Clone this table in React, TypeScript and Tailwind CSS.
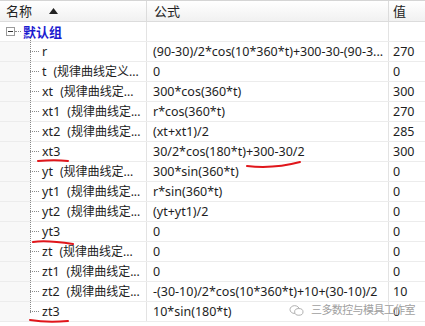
const FONT = { fontFamily: '"Noto Sans", "Noto Sans CJK SC", sans-serif' };

type Row = { name: string; desc?: string; formula: string; value: string };

const ROWS: Row[] = [
  { name: 'r', formula: '(90-30)/2*cos(10*360*t)+300-30-(90-3...', value: '270' },
  { name: 't', desc: '(规律曲线定义...', formula: '0', value: '0' },
  { name: 'xt', desc: '(规律曲线定...', formula: '300*cos(360*t)', value: '300' },
  { name: 'xt1', desc: '(规律曲线定...', formula: 'r*cos(360*t)', value: '270' },
  { name: 'xt2', desc: '(规律曲线定...', formula: '(xt+xt1)/2', value: '285' },
  { name: 'xt3', formula: '30/2*cos(180*t)+300-30/2', value: '300' },
  { name: 'yt', desc: '(规律曲线定...', formula: '300*sin(360*t)', value: '0' },
  { name: 'yt1', desc: '(规律曲线定...', formula: 'r*sin(360*t)', value: '0' },
  { name: 'yt2', desc: '(规律曲线定...', formula: '(yt+yt1)/2', value: '0' },
  { name: 'yt3', formula: '0', value: '0' },
  { name: 'zt', desc: '(规律曲线定...', formula: '0', value: '0' },
  { name: 'zt1', desc: '(规律曲线定...', formula: '0', value: '0' },
  { name: 'zt2', desc: '(规律曲线定...', formula: '-(30-10)/2*cos(10*360*t)+10+(30-10)/2', value: '10' },
  { name: 'zt3', formula: '10*sin(180*t)', value: '0' },
];

function Cells({ name, formula, value }: { name: React.ReactNode; formula: string; value: string }) {
  return (
    <div className="flex h-[20px] border-b border-[#ececec] text-[12.5px] text-[#1e1e1e] leading-[20px]">
      <div className="w-[146px] shrink-0 flex items-center">{name}</div>
      <div className="w-[242px] shrink-0 border-l border-[#e3e3e3] pl-[6px] whitespace-nowrap overflow-hidden">{formula}</div>
      <div className="flex-1 border-l border-[#e3e3e3] pl-[4px]">{value}</div>
    </div>
  );
}

export default function App() {
  return (
    <div className="relative w-[425px] h-[326px] bg-white overflow-hidden select-none" style={FONT}>
      {/* header */}
      <div className="flex h-[22px] border-t border-[#d5d5d5] border-b border-b-[#dcdcdc] bg-gradient-to-b from-white to-[#f1f1f1] text-[13px] text-[#222] leading-[20px]">
        <div className="w-[146px] shrink-0 flex items-center pl-[6px]">
          <span>名称</span>
          <svg width="9" height="6" viewBox="0 0 9 6" className="ml-[17px]">
            <path d="M0 6 L4.5 0 L9 6 Z" fill="#222" />
          </svg>
        </div>
        <div className="w-[242px] shrink-0 border-l border-[#dcdcdc] pl-[7px] flex items-center">公式</div>
        <div className="flex-1 border-l border-[#dcdcdc] pl-[4px] flex items-center">值</div>
      </div>

      {/* group row */}
      <Cells
        name={
          <div className="flex items-center pl-[6px]">
            <span className="w-[9px] h-[9px] border border-[#9a9a9a] bg-white flex items-center justify-center">
              <span className="w-[5px] h-px bg-[#333]" />
            </span>
            <span className="w-[6px] border-t border-dotted border-[#888]" />
            <span className="ml-[2px] font-bold text-[#1a1ad0] text-[13px]">默认组</span>
          </div>
        }
        formula=""
        value=""
      />

      {ROWS.map((r) => (
        <Cells
          key={r.name}
          name={
            <div className="flex items-center h-full w-full">
              <div className="w-[30px] h-full bg-[#f8f8f8]" />
              <span className="w-[9px] border-t border-dotted border-[#888]" />
              <span className="ml-[3px] whitespace-nowrap">
                {r.name}
                {r.desc && <span className="ml-[7px] text-[12px]">{r.desc}</span>}
              </span>
            </div>
          }
          formula={r.formula}
          value={r.value}
        />
      ))}

      {/* tree vertical line */}
      <div className="absolute left-[30px] top-[38px] h-[275px] border-l border-dotted border-[#888]" />

      {/* red annotation strokes */}
      <svg className="absolute left-0 top-0 pointer-events-none" width="425" height="326">
        <g stroke="#e0161b" strokeWidth="2" fill="none" strokeLinecap="round">
          <path d="M38 161 C48 160 60 160 68 161" />
          <path d="M247 166 C265 168 285 166 300 162" />
          <path d="M33 242 C45 240 60 242 73 244" />
          <path d="M30 320 C42 322 56 322 68 321" />
        </g>
      </svg>

      {/* watermark */}
      <div className="absolute left-[289px] top-[302px] flex items-center gap-[7px] text-[11px] tracking-[-0.6px] text-[#a0a0a0] [text-shadow:0_0_2px_#fff,0_0_2px_#fff]">
        <svg width="15" height="13" viewBox="0 0 16 14">
          <g fill="none" stroke="#aaa" strokeWidth="1">
            <ellipse cx="6" cy="6" rx="5" ry="4.2" />
            <ellipse cx="10.5" cy="8.5" rx="4.5" ry="3.6" fill="#fff" />
          </g>
        </svg>
        <span>三多数控与模具工作室</span>
      </div>
    </div>
  );
}
